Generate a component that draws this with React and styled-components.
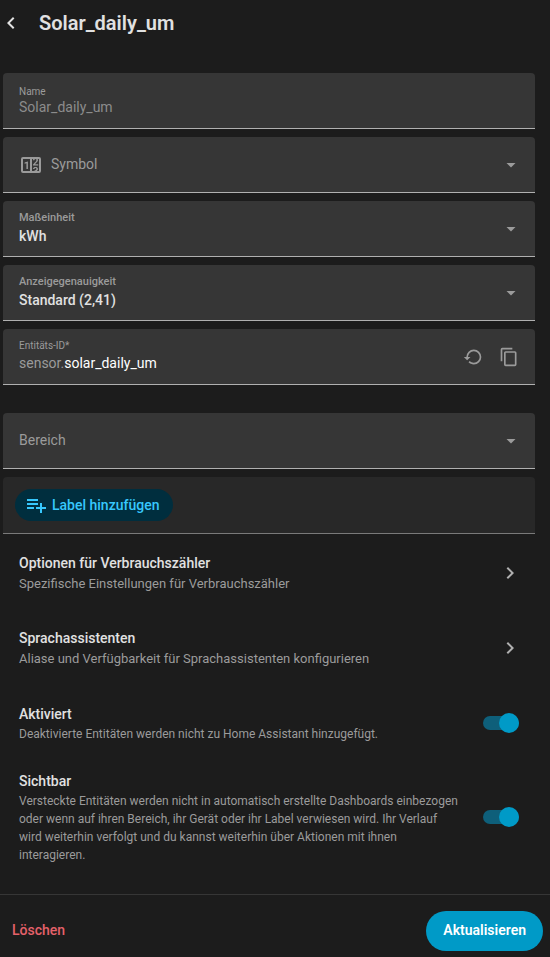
import React, { useState } from "react";
import styled, { createGlobalStyle } from "styled-components";

const GlobalStyle = createGlobalStyle`
    * {
        box-sizing: border-box;
    }
    body {
        margin: 0;
        background: #1c1c1c;
        color: #e1e1e1;
        font-family: Roboto, "Liberation Sans", sans-serif;
        font-size: 14px;
    }
    button, input, select {
        font-family: inherit;
    }
`;

const Dialog = styled.div`
    min-height: 100vh;
    display: flex;
    flex-direction: column;
`;

const Header = styled.header`
    display: flex;
    align-items: center;
    gap: 16px;
    height: 46px;
    margin-bottom: 27px;
`;

const Title = styled.h1`
    margin: 0;
    font-size: 20px;
    font-weight: 600;
    line-height: 24px;
`;

const IconButton = styled.button`
    display: flex;
    padding: 0;
    border: none;
    background: none;
    color: ${(props) => props.$color || "#9b9b9b"};
    cursor: pointer;
`;

const BackButton = styled(IconButton)`
    margin-left: -1px;
`;

const Icon = styled.svg`
    display: block;
    flex: none;
    fill: currentColor;
`;

const Content = styled.main`
    flex: 1;
    padding: 0 15px 0 3px;
`;

const Fields = styled.div`
    display: flex;
    flex-direction: column;
    gap: 8px;
`;

const FieldBox = styled.div`
    display: flex;
    align-items: center;
    height: 56px;
    padding: 0 12px 0 16px;
    margin-top: ${(props) => (props.$spaced ? "20px" : "0")};
    background: #363636;
    border-bottom: 1px solid #b0b0b0;
    border-radius: 4px 4px 0 0;
    color: #9b9b9b;
`;

const FieldBody = styled.div`
    flex: 1;
    min-width: 0;
    display: flex;
    flex-direction: column;
    padding-bottom: 2px;
`;

const FieldLabel = styled.label`
    font-size: ${(props) => (props.$small ? "10px" : "11px")};
    font-weight: ${(props) => (props.$small ? 400 : 500)};
    line-height: ${(props) => (props.$small ? "14px" : "16px")};
`;

const FieldLine = styled.div`
    display: flex;
    line-height: 20px;
`;

const TextInput = styled.input`
    flex: 1;
    min-width: 0;
    height: 20px;
    padding: 0;
    border: none;
    outline: none;
    background: none;
    font-size: 14px;
    color: ${(props) => (props.$bright ? "#ffffff" : "#8c8c8c")};
`;

const Select = styled.select`
    appearance: none;
    width: 100%;
    height: 20px;
    padding: 0;
    border: none;
    outline: none;
    background: none;
    font-size: 14px;
    font-weight: ${(props) => (props.$empty ? 400 : 500)};
    color: ${(props) => (props.$empty ? "#9b9b9b" : "#e1e1e1")};
`;

const LeadingIcon = styled.span`
    margin-right: 8px;
`;

const Actions = styled.div`
    display: flex;
    gap: 16px;
    padding-right: 4px;
`;

const LabelBox = styled(FieldBox)`
    height: 57px;
    padding: 0 12px;
    background: #282828;
    border-bottom-color: #7a7a7a;
`;

const AddLabel = styled.button`
    display: flex;
    align-items: center;
    gap: 4px;
    height: 32px;
    padding: 0 14px 0 9px;
    border: none;
    border-radius: 16px;
    background: #002e3e;
    color: #37c8fd;
    font-size: 14px;
    font-weight: 500;
    cursor: pointer;
`;

const Row = styled.div`
    display: flex;
    align-items: center;
    justify-content: space-between;
    padding: ${(props) => (props.$compact ? "8px" : "19px")} 16px;
`;

const LinkRow = styled.a`
    display: flex;
    align-items: center;
    justify-content: space-between;
    height: 75px;
    padding: 2px 13px 0 16px;
    color: #b0b0b0;
    text-decoration: none;
`;

const RowText = styled.div`
    max-width: 440px;
`;

const RowTitle = styled.div`
    color: #e1e1e1;
    font-weight: 500;
    line-height: 22px;
`;

const RowDescription = styled.div`
    font-size: ${(props) => (props.$large ? "13px" : "12px")};
    line-height: ${(props) => (props.$large ? "20px" : "18px")};
    color: #9b9b9b;
`;

const Switch = styled.input`
    appearance: none;
    flex: none;
    display: flex;
    align-items: center;
    justify-content: flex-end;
    width: 36px;
    height: 14px;
    margin: 0;
    border-radius: 7px;
    background: #0e5f7a;
    cursor: pointer;

    &::before {
        content: "";
        width: 20px;
        height: 20px;
        flex: none;
        border-radius: 50%;
        background: #009ac7;
    }

    &:not(:checked) {
        justify-content: flex-start;
        background: #4a4a4a;
    }

    &:not(:checked)::before {
        background: #9b9b9b;
    }
`;

const Footer = styled.footer`
    display: flex;
    align-items: center;
    justify-content: space-between;
    height: 63px;
    padding: 9px 7px 0 12px;
    border-top: 1px solid #363636;
`;

const DeleteButton = styled.button`
    padding: 0 0 2px;
    border: none;
    background: none;
    color: #e5616a;
    font-size: 14px;
    font-weight: 500;
    cursor: pointer;
`;

const UpdateButton = styled.button`
    height: 40px;
    padding: 0 17px 2px;
    border: none;
    border-radius: 20px;
    background: #009ac7;
    color: #ffffff;
    font-size: 14px;
    font-weight: 600;
    cursor: pointer;
`;

const icons = {
    back: "M15.41,16.58L10.83,12L15.41,7.41L14,6L8,12L14,18L15.41,16.58Z",
    next: "M8.59,16.58L13.17,12L8.59,7.41L10,6L16,12L10,18L8.59,16.58Z",
    down: "M7.5,10L12,14.5L16.5,10H7.5Z",
    counter:
        "M4,4H20A2,2 0 0,1 22,6V18A2,2 0 0,1 20,20H4A2,2 0 0,1 2,18V6A2,2 0 0,1 4,4M4,6V18H11V6H4M20,18V6H18.76C19,6.54 18.95,7.07 18.95,7.13C18.88,7.8 18.41,8.5 18.24,8.75L15.91,11.3L19.23,11.28L19.24,12.5L14.04,12.47L14,11.47C14,11.47 17.05,8.24 17.2,7.95C17.34,7.67 17.91,6 16.5,6C15.27,6.05 15.41,7.3 15.41,7.3L13.87,7.31C13.87,7.31 13.88,6.65 14.25,6H13V18H15.58L15.57,17.14L16.54,17.13C16.54,17.13 17.45,16.97 17.46,16.08C17.5,15.08 16.65,15.08 16.5,15.08C16.37,15.08 15.43,15.13 15.43,15.95H13.91C13.91,15.95 13.95,13.89 16.5,13.89C19.1,13.89 18.96,15.91 18.96,15.91C18.96,15.91 19,17.16 17.85,17.63L18.37,18H20M8.92,16H7.42V10.2L5.62,10.76V9.53L8.76,8.41H8.92V16Z",
    restore:
        "M13,3A9,9 0 0,0 4,12H1L4.89,15.89L4.96,16.03L9,12H6A7,7 0 0,1 13,5A7,7 0 0,1 20,12A7,7 0 0,1 13,19C11.07,19 9.32,18.21 8.06,16.94L6.64,18.36C8.27,20 10.5,21 13,21A9,9 0 0,0 22,12A9,9 0 0,0 13,3Z",
    copy: "M19,21H8V7H19M19,5H8A2,2 0 0,0 6,7V21A2,2 0 0,0 8,23H19A2,2 0 0,0 21,21V7A2,2 0 0,0 19,5M16,1H4A2,2 0 0,0 2,3V17H4V3H16V1Z",
    playlistPlus:
        "M3,16H10V14H3M18,14V10H16V14H12V16H16V20H18V16H22V14M14,6H3V8H14M14,10H3V12H14V10Z",
};

function MdiIcon({ name, size = 24 }) {
    return (
        <Icon width={size} height={size} viewBox="0 0 24 24" aria-hidden="true">
            <path d={icons[name]} />
        </Icon>
    );
}

function SelectField({ id, label, value, icon, spaced }) {
    return (
        <FieldBox $spaced={spaced}>
            {icon && (
                <LeadingIcon>
                    <MdiIcon name={icon} />
                </LeadingIcon>
            )}
            <FieldBody>
                {value && <FieldLabel htmlFor={id}>{label}</FieldLabel>}
                <Select id={id} $empty={!value} aria-label={value ? undefined : label}>
                    <option>{value || label}</option>
                </Select>
            </FieldBody>
            <MdiIcon name="down" />
        </FieldBox>
    );
}

function SwitchRow({ id, title, description, compact }) {
    const [checked, setChecked] = useState(true);

    return (
        <Row $compact={compact}>
            <RowText>
                <RowTitle as="label" htmlFor={id}>{title}</RowTitle>
                <RowDescription>{description}</RowDescription>
            </RowText>
            <Switch
                id={id}
                type="checkbox"
                role="switch"
                checked={checked}
                onChange={(e) => setChecked(e.target.checked)}
            />
        </Row>
    );
}

function NavRow({ title, description }) {
    return (
        <LinkRow href="#">
            <RowText>
                <RowTitle>{title}</RowTitle>
                <RowDescription $large>{description}</RowDescription>
            </RowText>
            <MdiIcon name="next" />
        </LinkRow>
    );
}

function App() {
    const [name, setName] = useState("Solar_daily_um");
    const [entityId, setEntityId] = useState("solar_daily_um");

    return (
        <Dialog>
            <GlobalStyle />
            <Header>
                <BackButton $color="#e1e1e1" aria-label="Zurück">
                    <MdiIcon name="back" />
                </BackButton>
                <Title>Solar_daily_um</Title>
            </Header>
            <Content>
                <Fields>
                    <FieldBox>
                        <FieldBody>
                            <FieldLabel $small htmlFor="name">Name</FieldLabel>
                            <TextInput
                                id="name"
                                value={name}
                                onChange={(e) => setName(e.target.value)}
                            />
                        </FieldBody>
                    </FieldBox>
                    <SelectField id="icon" label="Symbol" icon="counter" />
                    <SelectField id="unit" label="Maßeinheit" value="kWh" />
                    <SelectField id="precision" label="Anzeigegenauigkeit" value="Standard (2,41)" />
                    <FieldBox>
                        <FieldBody>
                            <FieldLabel $small htmlFor="entity-id">Entitäts-ID*</FieldLabel>
                            <FieldLine>
                                sensor.
                                <TextInput
                                    $bright
                                    id="entity-id"
                                    value={entityId}
                                    onChange={(e) => setEntityId(e.target.value)}
                                />
                            </FieldLine>
                        </FieldBody>
                        <Actions>
                            <IconButton aria-label="Zurücksetzen">
                                <MdiIcon name="restore" size={20} />
                            </IconButton>
                            <IconButton aria-label="Kopieren">
                                <MdiIcon name="copy" size={20} />
                            </IconButton>
                        </Actions>
                    </FieldBox>
                    <SelectField id="area" label="Bereich" spaced />
                    <LabelBox>
                        <AddLabel>
                            <MdiIcon name="playlistPlus" />
                            Label hinzufügen
                        </AddLabel>
                    </LabelBox>
                </Fields>
                <NavRow
                    title="Optionen für Verbrauchszähler"
                    description="Spezifische Einstellungen für Verbrauchszähler"
                />
                <NavRow
                    title="Sprachassistenten"
                    description="Aliase und Verfügbarkeit für Sprachassistenten konfigurieren"
                />
                <SwitchRow
                    id="enabled"
                    title="Aktiviert"
                    description="Deaktivierte Entitäten werden nicht zu Home Assistant hinzugefügt."
                />
                <SwitchRow
                    id="visible"
                    compact
                    title="Sichtbar"
                    description="Versteckte Entitäten werden nicht in automatisch erstellte Dashboards einbezogen oder wenn auf ihren Bereich, ihr Gerät oder ihr Label verwiesen wird. Ihr Verlauf wird weiterhin verfolgt und du kannst weiterhin über Aktionen mit ihnen interagieren."
                />
            </Content>
            <Footer>
                <DeleteButton>Löschen</DeleteButton>
                <UpdateButton>Aktualisieren</UpdateButton>
            </Footer>
        </Dialog>
    );
}

export default App;
